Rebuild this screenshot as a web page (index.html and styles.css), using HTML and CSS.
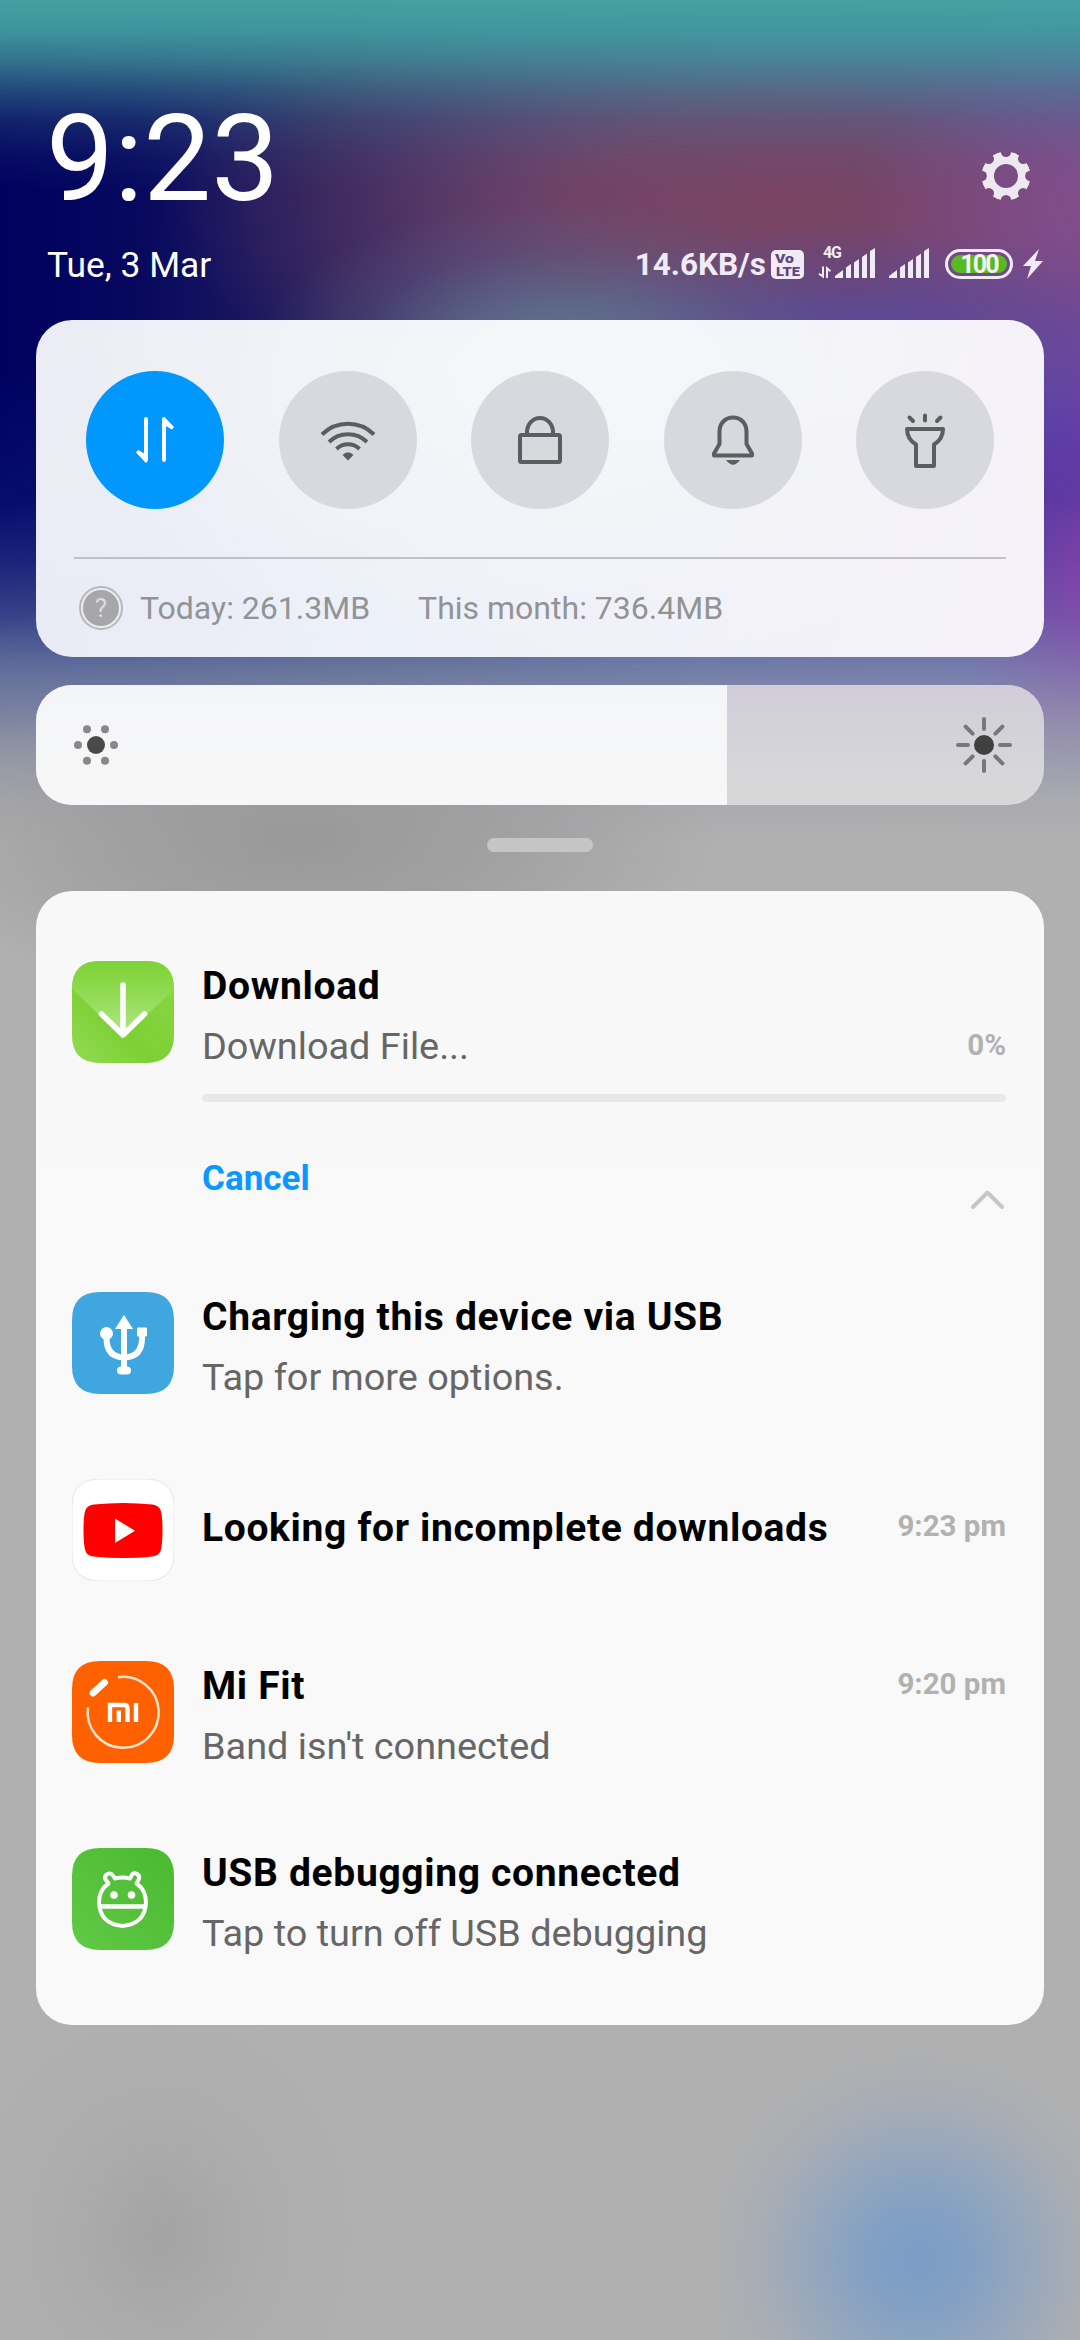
FILE: index.html
```html
<!DOCTYPE html>
<html lang="en">
<head>
<meta charset="utf-8">
<title>Notification shade</title>
<link rel="stylesheet" href="styles.css">
</head>
<body>
<main class="shade">
  <header class="head">
    <div class="head-top">
      <div class="clock">9:23</div>
      <svg class="gear" width="48" height="48" viewBox="-24 -24 48 48"><defs><mask id="gm" maskUnits="userSpaceOnUse" x="-25" y="-25" width="50" height="50"><circle r="24.5" fill="#fff"/><circle r="12" fill="#000"/><g fill="#000"><circle cy="-24.3" r="5.2"/><circle cy="-24.3" r="5.2" transform="rotate(45)"/><circle cy="-24.3" r="5.2" transform="rotate(90)"/><circle cy="-24.3" r="5.2" transform="rotate(135)"/><circle cy="-24.3" r="5.2" transform="rotate(180)"/><circle cy="-24.3" r="5.2" transform="rotate(225)"/><circle cy="-24.3" r="5.2" transform="rotate(270)"/><circle cy="-24.3" r="5.2" transform="rotate(315)"/></g></mask></defs><circle r="24.5" fill="#eee8f1" mask="url(#gm)"/></svg>
    </div>
    <div class="head-row">
      <div class="date">Tue, 3 Mar</div>
      <div class="status">
        <span class="speed">14.6KB/s</span>
        <svg class="volte" width="33" height="29" viewBox="0 0 33 29"><rect width="33" height="29" rx="5" fill="#f1ebf5"/><text class="volte-text" x="4" y="12.5" textLength="19" lengthAdjust="spacingAndGlyphs">Vo</text><text class="volte-text" x="5" y="25.5" textLength="24" lengthAdjust="spacingAndGlyphs">LTE</text></svg>
        <svg class="sim1" width="57" height="38" viewBox="0 -6 57 38"><text class="net-text" x="5" y="11" textLength="19">4G</text><g fill="#f1ebf5"><path d="M4 19.500h2v12L.5 27.500l1-1.500L4 27.500zM8 31V19l5 4.500-1 1.500-2-1.500V31z"/><path d="M17 31v-2l8-6v8zM28 31V20.500l5-3.500v14zM36 31V15.500l5-3.500v19zM44 31V10l5-3.500V31zM52 31V4l5-3v30z"/></g></svg>
        <svg class="sim2" width="40" height="31" viewBox="0 0 40 31"><path fill="#f1ebf5" d="M0 30v-2l8-6v8zM11 30V19.500l5-3.500v14zM19 30V14.500l5-3.500v19zM27 30V9l5-3.500V30zM35 30V3l5-3v30z"/></svg>
        <div class="battery"><div class="battery-fill">100</div></div>
        <svg class="bolt" width="20" height="30" viewBox="0 0 20 30"><path fill="#f1ebf5" d="M16 0 0 17h8L4 30 20 12h-8z"/></svg>
      </div>
    </div>
  </header>

  <section class="card quick">
    <div class="toggles">
      <div class="toggle on"><svg width="40" height="48" viewBox="0 0 40 48"><g fill="none" stroke="#fff" stroke-width="4" stroke-linecap="round"><path d="M11 3v41M29 3v41"/></g><path fill="#fff" stroke="#fff" stroke-linejoin="round" d="M11 46.500 1.500 36.500 3 34.500 11 39zM29 1l9.500 10-1.500 2-8-4.500z"/></svg></div>
      <div class="toggle"><svg width="56" height="42" viewBox="0 0 56 42"><g fill="none" stroke="#5c5d5e" stroke-width="4"><path d="M2 15.500a37 37 0 0 1 52 0M9 23a27 27 0 0 1 38 0M16.500 30a16.500 16.500 0 0 1 23 0"/></g><path fill="#5c5d5e" d="M28 41.500l-5.500-5.500q5.500-5.500 11 0z"/></svg></div>
      <div class="toggle"><svg width="46" height="50" viewBox="0 0 46 50"><g fill="none" stroke="#5c5d5e" stroke-width="4"><rect x="3" y="20" width="40" height="27" rx="1.500"/><path d="M10 20v-3a13 14 0 0 1 26 0v3"/></g></svg></div>
      <div class="toggle"><svg width="44" height="52" viewBox="0 0 44 52"><path fill="none" stroke="#5c5d5e" stroke-width="4" stroke-linejoin="round" d="M22 3.500c-8 0-13.500 6-13.500 14V30L3 39.500v2h38v-2L35.500 30V17.500c0-8-5.500-14-13.500-14z"/><path fill="#5c5d5e" d="M15 46h14q-7 9.500-14 0z"/></svg></div>
      <div class="toggle"><svg width="42" height="56" viewBox="0 0 42 56"><g fill="none" stroke="#5c5d5e" stroke-width="4" stroke-linecap="round" stroke-linejoin="round"><path d="M21 3.500v5M5.500 5.500 9 9M36.500 5.500 33 9"/><path d="M3 17h36q0 10-9 15.500V54H12V32.500Q3 27 3 17z"/></g></svg></div>
    </div>
    <div class="usage">
      <div class="help"><span class="help-dot">?</span></div>
      <span class="today">Today: 261.3MB</span>
      <span class="month">This month: 736.4MB</span>
    </div>
  </section>

  <section class="brightness">
    <div class="level"><svg width="44" height="42" viewBox="-22 -21 44 42"><circle r="9" fill="#4a4a4a"/><g fill="#888"><circle cx="-18" r="4"/><circle cx="18" r="4"/><circle cx="-9" cy="-15.800" r="4"/><circle cx="9" cy="-15.800" r="4"/><circle cx="-9" cy="15.800" r="4"/><circle cx="9" cy="15.800" r="4"/></g></svg></div>
    <svg class="sun" width="56" height="56" viewBox="-28 -28 56 56"><circle r="10" fill="#404040"/><path stroke="#77767a" stroke-width="4" stroke-linecap="round" d="M0-26v10M0 26V16M-26 0h10M26 0H16M-18.400-18.400l7 7M18.400-18.400l-7 7M-18.400 18.400l7-7M18.400 18.400l-7-7"/></svg>
  </section>

  <div class="handle"></div>

  <section class="card notes">
    <article class="note n-download">
      <svg class="app" width="102" height="102" viewBox="0 0 102 102"><defs><linearGradient id="dg" x1="0" y1="1" x2="1" y2="0"><stop offset="0" stop-color="#92da55"/><stop offset=".4" stop-color="#7dd034"/><stop offset="1" stop-color="#8ad746"/></linearGradient><linearGradient id="df" x1="0" y1="0" x2="0" y2="1"><stop offset="0" stop-color="#7ed236"/><stop offset=".45" stop-color="#91db55"/><stop offset="1" stop-color="#b4e68b"/></linearGradient><clipPath id="sq"><path id="sqp" d="M0 28Q0 0 28 0H74Q102 0 102 28V74Q102 102 74 102H28Q0 102 0 74z"/></clipPath></defs><g clip-path="url(#sq)"><path fill="url(#dg)" d="M0 0h102v102H0z"/><path fill="url(#df)" d="M0 0h102v28L51 77 0 28z"/></g><path fill="none" stroke="#fff" stroke-width="5.600" stroke-linecap="round" stroke-linejoin="round" d="M51 24v50M29.500 53 51 74l21.500-21"/></svg>
      <div class="body">
        <h2 class="title">Download</h2>
        <div class="line"><p class="sub">Download File...</p><span class="meta">0%</span></div>
        <div class="progress"></div>
        <div class="actions"><a class="cancel">Cancel</a><svg class="chev" width="36" height="21" viewBox="0 0 36 21"><path fill="none" stroke="#c6c6c6" stroke-width="4" stroke-linecap="round" stroke-linejoin="round" d="M3 18 17.500 3.500 32 18"/></svg></div>
      </div>
    </article>
    <article class="note n-usb">
      <svg class="app" width="102" height="102" viewBox="0 0 102 102"><use href="#sqp" fill="#40a6e0"/><g fill="#fff"><path d="M52 23l9 14H43z"/><circle cx="34.500" cy="41.500" r="6.500"/><rect x="65" y="35.500" width="10" height="9" rx="1"/><rect x="45" y="74.500" width="14" height="8" rx="4"/></g><path fill="none" stroke="#fff" stroke-width="6" d="M52 34v44M34.500 41v5q0 19 17.500 19.500Q70 65 70 46v-5"/></svg>
      <div class="body"><h2 class="title">Charging this device via USB</h2><p class="sub">Tap for more options.</p></div>
    </article>
    <article class="note n-tube">
      <svg class="app" width="102" height="102" viewBox="0 0 102 102"><use href="#sqp" fill="#fff" stroke="#e6e6e6"/><path fill="#f00" d="M11.500 51.500q0-15 2-20.500 1.500-4.500 8-5.500 30-3 59 0 6.500 1 8 5.500 2 5.500 2 20.500t-2 20.500q-1.500 4.500-8 5.500-29.500 3-59 0-6.500-1-8-5.500-2-5.500-2-20.500z"/><path fill="#fff" d="M43 39.500v24.500l20-12.300z"/></svg>
      <div class="body single"><h2 class="title">Looking for incomplete downloads</h2><span class="meta">9:23 pm</span></div>
    </article>
    <article class="note n-fit">
      <svg class="app" width="102" height="102" viewBox="0 0 102 102"><use href="#sqp" fill="#ff6000"/><g fill="none"><path stroke="#ffe4cc" stroke-width="2.500" d="M46 16.200A35.500 35.500 0 1 1 16 46.500"/><path stroke="#fff" stroke-width="7" stroke-linecap="round" d="M21 32 32.500 21.500"/><path stroke="#fff" stroke-width="4.400" d="M38 61V44h14q3.500 0 3.500 3.500V61M46.800 49.500V61M64 42v19"/></g></svg>
      <div class="body"><div class="line"><h2 class="title">Mi Fit</h2><span class="meta">9:20 pm</span></div><p class="sub">Band isn't connected</p></div>
    </article>
    <article class="note n-debug">
      <svg class="app" width="102" height="102" viewBox="0 0 102 102"><defs><linearGradient id="bg" x1="0" y1="1" x2="1" y2="0"><stop offset="0" stop-color="#61c946"/><stop offset="1" stop-color="#49b92f"/></linearGradient></defs><use href="#sqp" fill="url(#bg)"/><g fill="none" stroke="#fff" stroke-width="4" stroke-linejoin="round"><path d="M43 30.500q8-2 15 0l1.500-3q2-3.500 5.500-1.500 3.500 2.500 1.500 6l-2 3.500Q74 42 74 54.500 73 76 50.500 78 28 76 27 54.500 27 42 36.500 35.500l-3-4q-1.500-4 2-5.500 3.500-1.500 5.500 1.500z"/><path stroke-width="4.500" d="M28 58.500h45"/></g><circle cx="42" cy="47" r="3.800" fill="#fff"/><circle cx="59.500" cy="47" r="3.800" fill="#fff"/></svg>
      <div class="body"><h2 class="title">USB debugging connected</h2><p class="sub">Tap to turn off USB debugging</p></div>
    </article>
  </section>
</main>
</body>
</html>
```

FILE: styles.css
```css
* { box-sizing: border-box; margin: 0; padding: 0; }
body { width: 1080px; height: 2340px; overflow: hidden; font-family: Roboto, "Noto Sans", sans-serif; }
svg { display: block; flex: none; }
.shade {
  height: 2340px; padding: 0 36px; display: flex; flex-direction: column;
  background:
    radial-gradient(ellipse 260px 260px at 918px 2260px, #7a9dc6 0, rgba(124,158,198,.88) 20%, rgba(134,161,196,.6) 42%, rgba(150,167,190,.3) 62%, rgba(165,172,184,.1) 80%, rgba(176,176,176,0) 100%),
    radial-gradient(ellipse 210px 240px at 160px 2235px, rgba(163,163,163,1) 0, rgba(168,168,168,.5) 45%, rgba(176,176,176,0) 100%),
    radial-gradient(ellipse 420px 160px at 300px 840px, rgba(150,150,150,.9) 0, rgba(154,154,154,.65) 50%, rgba(176,176,176,0) 100%),
    linear-gradient(180deg, rgba(176,176,176,0) 560px, rgba(174,174,176,.08) 620px, rgba(174,174,176,.22) 670px, rgba(174,174,176,.6) 740px, rgba(176,176,176,.9) 800px, #b0b0b0 840px),
    linear-gradient(180deg, #44a0a2 0, rgba(64,156,160,.95) 30px, rgba(66,148,156,.78) 60px, rgba(66,138,150,.52) 90px, rgba(66,126,146,.28) 120px, rgba(66,116,142,.1) 155px, rgba(66,110,140,0) 190px),
    radial-gradient(ellipse 300px 150px at 560px 350px, #60788c 0, rgba(94,114,142,.72) 35%, rgba(90,104,140,.28) 68%, rgba(86,96,140,0) 100%),
    radial-gradient(ellipse 150px 210px at 1100px 580px, rgba(146,62,172,.8) 0, rgba(142,62,172,.35) 50%, rgba(140,60,170,0) 100%),
    radial-gradient(ellipse 320px 130px at 850px 355px, rgba(84,74,160,.9) 0, rgba(84,74,160,.4) 55%, rgba(84,74,160,0) 100%),
    radial-gradient(ellipse 230px 230px at 1090px 200px, rgba(136,82,144,.75) 0, rgba(134,80,150,.4) 50%, rgba(130,80,160,0) 100%),
    radial-gradient(ellipse 620px 240px at 780px 200px, #7a4462 0, rgba(118,68,98,.85) 35%, rgba(106,62,98,.4) 68%, rgba(100,60,100,0) 100%),
    linear-gradient(180deg, rgba(10,24,128,0) 360px, rgba(10,30,130,.4) 500px, rgba(70,92,156,.6) 610px, rgba(104,128,172,.72) 670px, rgba(116,134,166,.7) 740px),
    linear-gradient(90deg, #00005e 0, #06085e 130px, #2a225e 350px, #54489a 720px, #6248ac 1000px, #6a44ae 1080px);
}
.head { height: 320px; flex: none; display: flex; flex-direction: column; }
.head-top { display: flex; justify-content: space-between; padding: 87px 14px 0 10px; height: 237px; }
.clock { font-size: 121px; line-height: 144px; color: #fff; }
.gear { margin-top: 65px; }
.head-row { display: flex; justify-content: space-between; padding: 0 1px 0 11px; color: #fff; }
.date { font-size: 35.400px; line-height: 56px; }
.status { display: flex; color: #f1ebf5; align-items: flex-start; }
.speed { font-size: 31.500px; font-weight: 700; line-height: 56px; margin-right: 5px; }
.volte { margin-top: 13px; }
.volte-text { font: 900 13px Roboto, sans-serif; fill: #5d4586; }
.sim1 { margin: 4px 0 0 14px; }
.net-text { font: 700 16px Roboto, sans-serif; fill: #f1ebf5; }
.sim2 { margin: 11px 0 0 14px; }
.battery { margin: 12px 0 0 16px; width: 68px; height: 30px; border: 3px solid #f1ebf5; border-radius: 15px; padding: 3px; }
.battery-fill { height: 18px; border-radius: 9px; background: #58b924; text-align: center; font-size: 25px; line-height: 19px; font-weight: 700; letter-spacing: -1.800px; color: #f4f4ee; }
.bolt { margin: 12px 0 0 10px; }

.card { flex: none; border-radius: 36px; }
.quick { height: 337px; background: linear-gradient(180deg, rgba(255,255,255,.1), rgba(255,255,255,0)), radial-gradient(ellipse 500px 300px at 520px 60px, #f4f6f7, rgba(244,246,247,0)), linear-gradient(110deg, #e9eaf3 0, #ecf0f9 40%, #f2f1f8 75%, #f5f2f8 100%); padding: 51px 38px 0; }
.toggles { display: flex; justify-content: space-between; padding: 0 12px; height: 186px; }
.toggle { width: 138px; height: 138px; border-radius: 50%; background: #d8d9de; display: flex; align-items: center; justify-content: center; }
.toggle.on { background: #0098ff; }
.usage { border-top: 2px solid #c0c1c6; display: flex; align-items: center; height: 100px; padding-left: 5px; font-size: 32px; color: #929396; }
.help { width: 44px; height: 44px; border-radius: 50%; border: 2px solid #b8b8bb; padding: 2px; margin-right: 17px; }
.help-dot { display: block; height: 36px; border-radius: 50%; background: #a7a7aa; color: #dcdcde; text-align: center; font-size: 26px; line-height: 37px; }
.month { margin-left: 48px; }

.brightness { flex: none; margin-top: 28px; height: 120px; border-radius: 36px; overflow: hidden; display: flex; align-items: center; justify-content: space-between; padding-right: 32px; background: linear-gradient(180deg, #d0cdd9, #d7d7d8 80%); }
.level { width: 691px; height: 120px; display: flex; align-items: center; padding-left: 38px; background: linear-gradient(180deg, #f4f5f8, #f7f7f7); }
.handle { flex: none; align-self: center; width: 106px; height: 14px; border-radius: 7px; margin-top: 33px; background: #c5c5c5; }

.notes { margin-top: 39px; height: 1134px; padding: 70px 38px 0 36px; background: linear-gradient(180deg, #f8f8f8, #f9f9f9); }
.note { display: flex; gap: 28px; }
.n-download { height: 331px; }
.n-usb { height: 187px; }
.n-tube { height: 182px; }
.n-fit { height: 187px; }
.body { flex: 1; }
.title { font-size: 39px; line-height: 50px; font-weight: 700; letter-spacing: .66px; color: #000; white-space: nowrap; }
.sub { font-size: 37.850px; line-height: 50px; margin-top: 10px; color: #666; }
.line { display: flex; justify-content: space-between; }
.meta { font-size: 29.500px; font-weight: 700; color: #b1b1b1; line-height: 46px; }
.n-download .meta { margin-top: 11px; }
.single { display: flex; justify-content: space-between; padding-top: 24px; }
.progress { height: 8px; border-radius: 4px; background: #e8e8e8; margin-top: 23px; }
.actions { display: flex; justify-content: space-between; margin-top: 52px; }
.cancel { font-size: 35px; line-height: 50px; font-weight: 700; color: #0a98ff; }
.chev { margin: 35px 0 0; }
```
